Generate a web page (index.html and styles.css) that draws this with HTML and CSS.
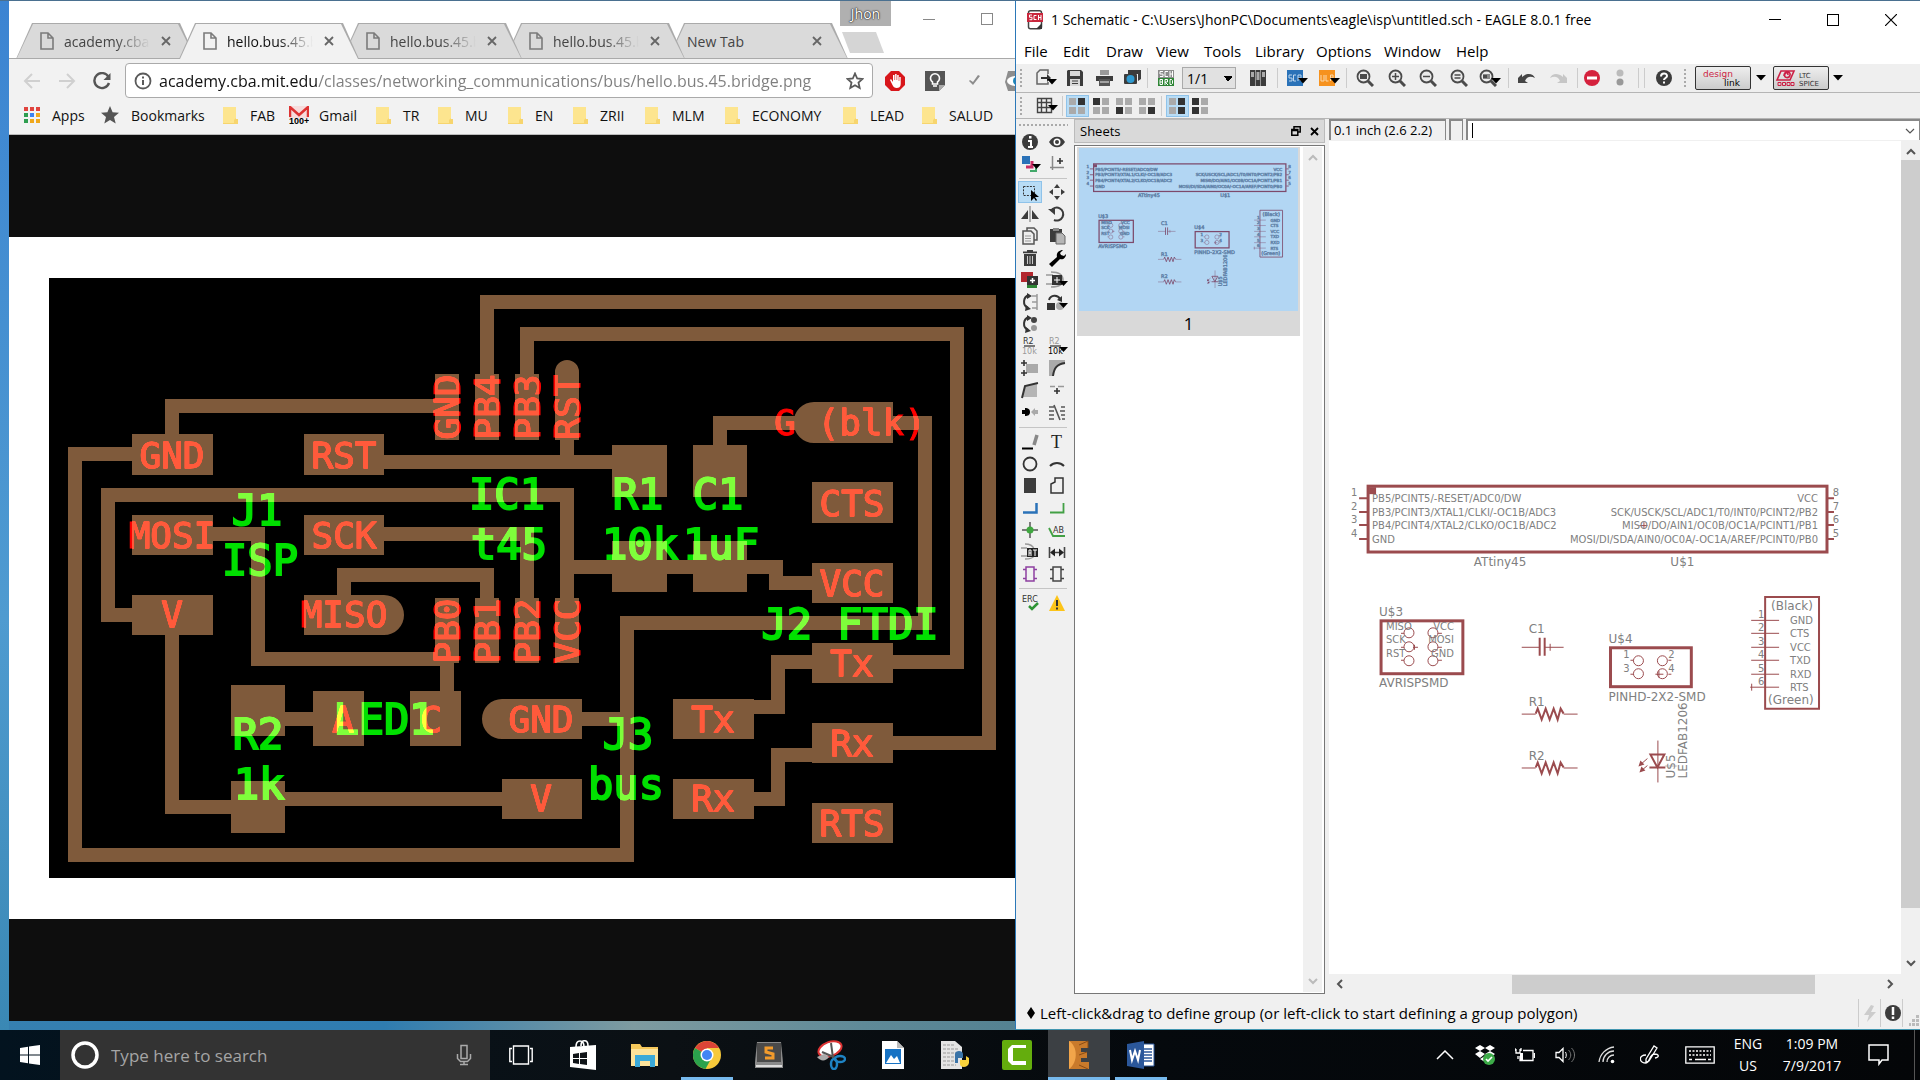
FILE: index.html
```html
<!DOCTYPE html>
<html lang="en">
<head>
<meta charset="UTF-8">
<meta name="viewport" content="width=device-width, initial-scale=1.0">
<title>Desktop</title>
<link rel="stylesheet" href="styles.css">
</head>
<body>

<!-- shared symbols -->
<svg class="defs" width="0" height="0" aria-hidden="true">
<symbol id="page" viewBox="0 0 14 18"><path d="M1 1h7l5 5v11H1zM8 1v5h5" fill="none" stroke="#7b7b7b" stroke-width="1.6"/></symbol>
<symbol id="x" viewBox="0 0 12 12"><path d="M2 2l8 8M10 2l-8 8" stroke="#666" stroke-width="1.8"/></symbol>
<symbol id="folder" viewBox="0 0 16 18"><path d="M1 1h13v12h2v5H1z" fill="#f7d56e"/><path d="M1 1h13v11l-2 2v3H1z" fill="#fde58f"/></symbol>
<symbol id="dd" viewBox="0 0 10 6"><path d="M0 0h10L5 5.500z" fill="#000"/></symbol>
<symbol id="lens" viewBox="0 0 18 18"><circle cx="7.500" cy="7.500" r="6" fill="#ececec" stroke="#4b4b4b" stroke-width="1.800"/><path d="M12 12l5 5" stroke="#4b4b4b" stroke-width="3"/></symbol>
<symbol id="up" viewBox="0 0 10 8"><path d="M1 7l4-4 4 4" fill="none" stroke="currentColor" stroke-width="2"/></symbol>
</svg>

<div class="desktop">

<main class="browser">
<div class="tabstrip">
<button class="tab"><svg width="14" height="18"><use href="#page"/></svg><span>academy.cba.mit</span><svg class="close" width="12" height="12"><use href="#x"/></svg></button>
<button class="tab active"><svg width="14" height="18"><use href="#page"/></svg><span>hello.bus.45.bridge</span><svg class="close" width="12" height="12"><use href="#x"/></svg></button>
<button class="tab"><svg width="14" height="18"><use href="#page"/></svg><span>hello.bus.45.bridge</span><svg class="close" width="12" height="12"><use href="#x"/></svg></button>
<button class="tab"><svg width="14" height="18"><use href="#page"/></svg><span>hello.bus.45.bridge</span><svg class="close" width="12" height="12"><use href="#x"/></svg></button>
<button class="tab plain"><span>New Tab</span><svg class="close" width="12" height="12"><use href="#x"/></svg></button>
<button class="newtab" aria-label="New tab"></button>
<div class="wincontrols"><button class="user">Jhon</button>
<svg width="12" height="12"><path d="M0 6.500h12" stroke="#888"/></svg>
<svg width="13" height="13"><rect x=".5" y=".5" width="11" height="11" fill="none" stroke="#888"/></svg></div>
</div>

<div class="navbar">
<svg width="18" height="18"><path d="M17 9H2M9 2L2 9l7 7" fill="none" stroke="#d0d0d0" stroke-width="2"/></svg>
<svg width="18" height="18"><path d="M1 9h15M9 2l7 7-7 7" fill="none" stroke="#d0d0d0" stroke-width="2"/></svg>
<svg width="18" height="18"><path d="M15.500 5A7.500 7.500 0 1 0 16 11" fill="none" stroke="#555" stroke-width="2.400"/><path d="M17.500 1v7h-7z" fill="#555"/></svg>
<div class="omnibox">
<svg width="18" height="18"><circle cx="9" cy="9" r="7.500" fill="none" stroke="#5a5a5a" stroke-width="1.800"/><path d="M9 8v5M9 4.500v2" stroke="#5a5a5a" stroke-width="2"/></svg>
<input type="text" aria-label="Address" value="academy.cba.mit.edu/classes/networking_communications/bus/hello.bus.45.bridge.png">
<svg width="18" height="18"><path d="M9 1.500l2.200 5 5.300.5-4 3.600 1.200 5.400L9 13.200 4.300 16l1.200-5.400-4-3.600 5.300-.5z" fill="none" stroke="#5a5a5a" stroke-width="1.800"/></svg>
</div>
<div class="exts">
<svg width="20" height="20"><path d="M6 0h8l6 6v8l-6 6H6l-6-6V6z" fill="#d8161b"/><path d="M5 9l1-1 2 3V4h1.500v5h.6V3h1.500v6h.6V4h1.500v6h.6V6h1.400v7c0 3-2 4-4 4s-3.500-1-4.200-3z" fill="#fff"/></svg>
<svg width="20" height="20"><path d="M0 0h20v14l-6 6H0z" fill="#555"/><path d="M20 14h-6v6z" fill="#aaa"/><path d="M7.500 11a4.500 4.500 0 1 1 5 0v2h-5zM8 15h4" fill="none" stroke="#fff" stroke-width="1.600"/></svg>
<svg width="20" height="20"><path d="M4 10l4 4 7-9-2-1-5 7-3-2z" fill="#8c8c8c"/></svg>
<svg width="20" height="20"><path d="M3 0h14v20H3l-3-9z" fill="#8d8d8d"/><ellipse cx="11" cy="10" rx="9" ry="5" fill="#fff"/><circle cx="12" cy="10" r="4" fill="#1d87b8"/></svg>
</div>
</div>

<nav class="bookmarks">
<a href="#"><svg width="16" height="18"><g fill="#e0443e"><path d="M0 1h4v4H0zM6 1h4v4H6zM12 1h4v4h-4z"/></g><path d="M0 7h4v4H0zM0 13h4v4H0z" fill="#2f9e50"/><path d="M6 7h4v4H6z" fill="#3b82f0"/><path d="M12 7h4v4h-4zM6 13h4v4H6zM12 13h4v4h-4z" fill="#f0a81c"/></svg>Apps</a>
<a href="#"><svg width="18" height="18"><path d="M9 0l2.600 6.300 6.400.5-5 4.200 1.700 6.600L9 14l-5.700 3.600L5 11 0 6.800l6.400-.5z" fill="#555"/></svg>Bookmarks</a>
<a href="#"><svg width="16" height="18"><use href="#folder"/></svg>FAB</a>
<a href="#" class="gmail"><svg width="20" height="18"><path d="M0 0h20v12H0z" fill="#f6dcdc"/><path d="M1 11V1l9 8 9-8v10" fill="none" stroke="#d33" stroke-width="2.500"/><text x="0" y="18" font-family="Liberation Sans" font-size="9" font-weight="bold" fill="#000">100+</text></svg>Gmail</a>
<a href="#"><svg width="16" height="18"><use href="#folder"/></svg>TR</a>
<a href="#"><svg width="16" height="18"><use href="#folder"/></svg>MU</a>
<a href="#"><svg width="16" height="18"><use href="#folder"/></svg>EN</a>
<a href="#"><svg width="16" height="18"><use href="#folder"/></svg>ZRII</a>
<a href="#"><svg width="16" height="18"><use href="#folder"/></svg>MLM</a>
<a href="#"><svg width="16" height="18"><use href="#folder"/></svg>ECONOMY</a>
<a href="#"><svg width="16" height="18"><use href="#folder"/></svg>LEAD</a>
<a href="#"><svg width="16" height="18"><use href="#folder"/></svg>SALUD</a>
</nav>

<div class="viewer">
<div class="sheet">
<svg class="board" viewBox="49 278 966 600" preserveAspectRatio="xMinYMin slice">
<rect x="49" y="278" width="966" height="600" fill="#000"/>
<!-- copper -->
<g class="trace">
<path d="M172 436V406H437M487 376V302H989V743H891M527 376V334H957V662H891M384 462H613M567 438V462"/>
<path d="M134 454H75V855H627V623H925V423H720V447M134 615H108V495H567V600M567 567H776V583H814M172 632V807H233"/>
<path d="M212 534H258V659H447V693M383 534H527V600M344 597V575H487V600M284 719H314M580 719H627M284 799H504"/>
<path d="M752 707H778V662H814M752 799H778V755H814"/>
</g>
<g class="pad">
<path d="M132 434h81v41h-81zM304 434h80v41h-80zM132 515h81v40h-81zM304 515h80v40h-80zM132 595h81v40h-81zM304 595h80a20 20 0 0 1 0 40h-80z"/>
<path d="M435 374h24v66h-24zM475 374h24v66h-24zM515 374h24v66h-24zM555 372a12 12 0 0 1 24 0v68h-24zM435 598h24v65h-24zM475 598h24v65h-24zM515 598h24v65h-24zM555 598h24v65h-24z"/>
<path d="M231 685h54v51h-54zM231 781h54v52h-54zM313 691h51v55h-51zM410 691h51v55h-51zM502 699h80v40h-80a20 20 0 0 1 0-40zM502 779h80v40h-80z"/>
<path d="M612 445h55v52h-55zM612 541h55v51h-55zM693 445h54v52h-54zM693 541h54v51h-54zM673 699h81v40h-81zM673 779h81v40h-81z"/>
<path d="M814 402h79v41h-79a20 20 0 0 1 0-41zM812 482h81v41h-81zM812 563h81v40h-81zM812 643h81v40h-81zM812 723h81v40h-81zM812 803h81v40h-81z"/>
</g>
<!-- pin names -->
<g class="pin">
<text x="172" y="468">GND</text><text x="344" y="468">RST</text><text x="172" y="548">MOSI</text><text x="344" y="548">SCK</text><text x="172" y="627">V</text><text x="344" y="627">MISO</text>
<text x="343" y="732">A</text><text x="431" y="732">C</text><text x="541" y="732">GND</text><text x="541" y="811">V</text><text x="713" y="732">Tx</text><text x="713" y="811">Rx</text>
<text x="850" y="435">G (blk)</text><text x="852" y="516">CTS</text><text x="852" y="596">VCC</text><text x="852" y="676">Tx</text><text x="852" y="756">Rx</text><text x="852" y="836">RTS</text>
<text transform="translate(460 407) rotate(-90)">GND</text><text transform="translate(500 407) rotate(-90)">PB4</text><text transform="translate(540 407) rotate(-90)">PB3</text><text transform="translate(580 407) rotate(-90)">RST</text>
<text transform="translate(460 631) rotate(-90)">PB0</text><text transform="translate(500 631) rotate(-90)">PB1</text><text transform="translate(540 631) rotate(-90)">PB2</text><text transform="translate(580 631) rotate(-90)">VCC</text>
</g>
<!-- part names -->
<g class="part">
<text x="257" y="525">J1</text><text x="260" y="575">ISP</text><text x="507" y="509">IC1</text><text x="509" y="559">t45</text><text x="638" y="509">R1</text><text x="640" y="559">10k</text><text x="718" y="509">C1</text><text x="721" y="559">1uF</text>
<text x="850" y="639">J2 FTDI</text><text x="628" y="749">J3</text><text x="626" y="799">bus</text><text x="258" y="749">R2</text><text x="259" y="799">1k</text><text x="384" y="734">LED1</text>
</g>
</svg>
</div>
</div>
</main>

<section class="eagle">
<header class="titlebar">
<svg width="16" height="20"><rect x="1.500" y=".8" width="13" height="18" rx="2" fill="#fff" stroke="#444" stroke-width="1.500"/><path d="M9 19l6-6v6z" fill="#333"/><path d="M0 3h16v9H0z" fill="#c9273d"/><path d="M5 5H2.500v2.300H5v2.400H2.500M9.500 5.500H7v4h2.500M11.500 5v5M14 5v5M11.500 7.500H14" fill="none" stroke="#fff"/></svg>
<h1>1 Schematic - C:\Users\JhonPC\Documents\eagle\isp\untitled.sch - EAGLE 8.0.1 free</h1>
<div class="winbtns">
<button aria-label="Minimize"><svg width="12" height="12"><path d="M0 5.500h12" stroke="#000"/></svg></button>
<button aria-label="Maximize"><svg width="12" height="12"><rect x=".5" y=".5" width="11" height="11" fill="none" stroke="#000"/></svg></button>
<button aria-label="Close"><svg width="12" height="12"><path d="M0 0l12 12M12 0L0 12" stroke="#000" stroke-width="1.200"/></svg></button>
</div>
</header>
<nav class="menubar"><button>File</button><button>Edit</button><button>Draw</button><button>View</button><button>Tools</button><button>Library</button><button>Options</button><button>Window</button><button>Help</button></nav>

<div class="toolbar main-tools">
<i class="grip"></i>
<svg width="22" height="18"><path d="M12 5V1H4L1 4v11h11v-2" fill="none" stroke="#666" stroke-width="1.500"/><path d="M5 8h6V5l4 4-4 4v-3H5z" fill="#333"/><path d="M11 10h10l-5 5.500z"/></svg>
<svg width="16" height="16"><path d="M1 0h13l2 2v14H0V1z" fill="#3c3c3c"/><path d="M3 1h10v5H3zM3 9h10v7H3z" fill="#d8d8d8"/><path d="M5 11h6M5 13.500h6" stroke="#3c3c3c"/></svg>
<svg width="17" height="16"><path d="M4 0h9v5H4z" fill="#999"/><path d="M0 6h17v5H0z" fill="#3c3c3c"/><path d="M3 9h11v7H3z" fill="#555"/><path d="M4 12h9" stroke="#eee"/></svg>
<svg width="17" height="16"><path d="M4 0h13v9l-3 2V4H4z" fill="#3c3c3c"/><rect y="4" width="13" height="10" rx="1" fill="#3c3c3c"/><circle cx="6.500" cy="9" r="4" fill="#2f9ad0"/></svg>
<i class="sep"></i>
<svg width="16" height="16"><path d="M0 0h16v8H0z" fill="#8c8c8c"/><path d="M0 8h16v8H0z" fill="#2d8535"/><path d="M5 1.500H2V4h3v2.500H2M10 1.500H7v5h3M12 1v6M14.500 1v6M12 4h2M2 9.500v5h2.500v-5zM2 12h2.500M7 15V9.500h2.500V12H7l3 3M12 9.500v5h1.500l1-1v-3l-1-1z" fill="none" stroke="#fff"/></svg>
<select aria-label="Sheet"><option>1/1</option></select>
<svg width="16" height="16"><path d="M0 0h5v16H0zM5.500 0h5v16h-5zM11 0h5v16h-5z" fill="#3c3c3c"/><path d="M1 2h3v5H1zM6.500 2h3v8h-3zM12 2h3v5h-3z" fill="#aaa"/></svg>
<i class="sep"></i>
<svg width="24" height="16"><path d="M3 0h16v16H3z" fill="#2a72b8"/><path d="M8 5H5v3h3v3H5M12 5H9.500v6H12M14 11V5h3v3h-3l3 3" fill="none" stroke="#bcd6ee"/><path d="M14 8h10l-5 5.500z"/></svg>
<svg width="24" height="16"><path d="M3 0h16v16H3z" fill="#f6921e"/><path d="M5 5v6h3V5M10 5v6h2.500M14.500 11V5H17v3h-2.500" fill="none" stroke="#fcd9ac"/><path d="M14 8h10l-5 5.500z"/></svg>
<i class="sep"></i>
<svg width="18" height="18"><use href="#lens"/><path d="M4 5h7v5H4z" fill="#4b4b4b"/></svg>
<svg width="18" height="18"><use href="#lens"/><path d="M4 7.500h7M7.500 4v7" stroke="#4b4b4b" stroke-width="1.500"/></svg>
<svg width="18" height="18"><use href="#lens"/><path d="M4 7.500h7" stroke="#4b4b4b" stroke-width="1.500"/></svg>
<svg width="18" height="18"><use href="#lens"/><path d="M4.500 6h6M4.500 9h6" stroke="#4b4b4b" stroke-width="1.500"/></svg>
<svg width="22" height="18"><use href="#lens" width="18" height="18"/><path d="M4 5h7v5H4z" fill="#888"/><path d="M4 6h4v3H4z" fill="#4b4b4b"/><path d="M12 9h10l-5 5.500z"/></svg>
<i class="sep"></i>
<svg width="17" height="16"><path d="M0 8l4-4v3c6-5 11-3 13 1-4-2-8-2-10 3l3 2H0z" fill="#454545"/></svg>
<svg width="17" height="16"><path d="M17 8l-4-4v3C7 2 2 4 0 8c4-2 8-2 10 3l-3 2h10z" fill="#c6c6c6"/></svg>
<i class="sep"></i>
<svg width="16" height="16"><circle cx="8" cy="8" r="8" fill="#d5213d"/><path d="M3 6.500h10v3H3z" fill="#fff"/></svg>
<svg width="8" height="18"><circle cx="4" cy="4" r="3.500" fill="#bbb"/><circle cx="4" cy="13" r="3.500" fill="#999"/></svg>
<i class="sep"></i><i class="sep"></i>
<svg width="16" height="16"><circle cx="8" cy="8" r="8" fill="#3c3c3c"/><path d="M5 6.500c0-4 6-4 6-.5 0 2-3 2-3 4M8 11.500v2" fill="none" stroke="#fff" stroke-width="2"/></svg>
<i class="grip"></i>
<button class="vendor">
<svg width="54" height="22"><g font-family="DejaVu Sans" font-size="9"><text x="7" y="10" fill="#cc1f45">design</text><text x="28" y="19" fill="#000">link</text></g></svg></button>
<svg width="10" height="6"><use href="#dd"/></svg>
<button class="vendor">
<svg width="54" height="22"><path d="M3 13l4-9h13l-4 9zM10 9c0-5 7-5 6-1s-7 3-5-1c1-2 3-2 3 1" fill="none" stroke="#cc1f45" stroke-width="1.600"/><path d="M4 15.500h3v3H4zM8.500 15.500h3v3h-3zM13 15.500h3v3h-3zM17 15.500h3v3h-3z" fill="none" stroke="#cc1f45"/><g font-family="DejaVu Sans" font-size="7" fill="#333"><text x="25" y="11">LTC</text><text x="25" y="19">SPICE</text></g></svg></button>
<svg width="10" height="6"><use href="#dd"/></svg>
</div>

<div class="toolbar layer-tools">
<i class="grip"></i>
<svg width="22" height="17"><path d="M1.500 1.500h14v14h-14zM5.500 1v15M10.500 1v15M1 5.500h15M1 10.500h15" fill="none" stroke="#444" stroke-width="1.400"/><path d="M12 8h10l-5 5.500z"/></svg>
<i class="sep"></i>
<button class="on"><svg width="16" height="16"><path d="M0 0h7v7H0zM0 9h7v7H0zM9 9h7v7H9z" fill="#aaa"/><path d="M9 0h7v7H9z" fill="#333"/></svg></button>
<button><svg width="16" height="16"><path d="M9 0h7v7H9zM0 9h7v7H0zM9 9h7v7H9z" fill="#aaa"/><path d="M0 0h7v7H0z" fill="#333"/></svg></button>
<button><svg width="16" height="16"><path d="M0 0h7v7H0zM9 0h7v7H9zM9 9h7v7H9z" fill="#aaa"/><path d="M0 9h7v7H0z" fill="#333"/></svg></button>
<button><svg width="16" height="16"><path d="M0 0h7v7H0zM9 0h7v7H9zM0 9h7v7H0z" fill="#aaa"/><path d="M9 9h7v7H9z" fill="#333"/></svg></button>
<i class="sep"></i>
<button class="on"><svg width="16" height="16"><path d="M0 0h7v7H0zM0 9h7v7H0z" fill="#aaa"/><path d="M9 0h7v7H9zM9 9h7v7H9z" fill="#333"/></svg></button>
<button><svg width="16" height="16"><path d="M9 0h7v7H9zM9 9h7v7H9z" fill="#aaa"/><path d="M0 0h7v7H0zM0 9h7v7H0z" fill="#333"/></svg></button>
</div>

<div class="work">
<aside class="palette">
<i class="hgrip"></i>
<svg width="18" height="18"><circle cx="9" cy="9" r="8" fill="#3c3c3c"/><path d="M7 8h3v6M7 14h5" stroke="#fff" stroke-width="2" fill="none"/><path d="M8 3h2.500v2.500H8z" fill="#fff"/></svg>
<svg width="18" height="18"><path d="M1 9c4-7 12-7 16 0-4 7-12 7-16 0z" fill="#3c3c3c"/><circle cx="9" cy="9" r="3.500" fill="#fff"/><circle cx="9" cy="9" r="2" fill="#3c3c3c"/></svg>
<svg width="24" height="18"><path d="M4 1h8v8H4z" fill="#2a72b8"/><path d="M14 6v6H8" fill="none" stroke="#c92f65" stroke-width="3"/><path d="M18 10v6h-6" fill="none" stroke="#42a86a" stroke-width="2"/><path d="M14 9h9l-4.500 5z"/></svg>
<svg width="18" height="18"><path d="M4.500 1v14M2 12.500h14" stroke="#888" stroke-width="1.500"/><path d="M12 3v6M9 6h6" stroke="#333" stroke-width="1.600"/></svg>
<i class="rule"></i>
<svg class="on" width="22" height="20"><path d="M4.500 4.500h11v9h-11z" fill="none" stroke="#333" stroke-dasharray="2 1.200"/><path d="M12 8v11l3-3 2 3 1-1-2-3h4z" fill="#000"/></svg>
<svg width="18" height="18"><path d="M9 1l3 4H6zM9 17l3-4H6zM1 9l4-3v6zM17 9l-4-3v6z" fill="#3c3c3c"/></svg>
<svg width="18" height="18"><path d="M9 1v16" stroke="#999" stroke-width="1.500"/><path d="M7 5v9H0zM11 5v9h7z" fill="#3c3c3c"/></svg>
<svg width="18" height="18"><path d="M3 6a6.500 6.500 0 1 1 3 9" fill="none" stroke="#3c3c3c" stroke-width="2"/><path d="M0 4h7v6z" fill="#3c3c3c"/></svg>
<svg width="18" height="18"><path d="M6 4V1h7l3 3v9h-3M2 4h8l3 3v10H2z" fill="#eee" stroke="#555" stroke-width="1.500"/><path d="M4 9h6M4 11.500h6M4 14h6" stroke="#999"/></svg>
<svg width="18" height="18"><path d="M2 2h12v13H2z" fill="#3c3c3c"/><path d="M5 1h6v3H5z" fill="#888"/><path d="M8 6h6l3 3v8H8z" fill="#b5b5b5" stroke="#666"/></svg>
<svg width="18" height="18"><path d="M3 5h12v12H3zM2 2.500h14v1.800H2zM6 1h6v2H6z" fill="#3c3c3c"/><path d="M6.500 7v8M9 7v8M11.500 7v8" stroke="#ccc"/></svg>
<svg width="18" height="18"><path d="M1 15L9 8c-1-4 2-7 6-7l-3 3 1 2 3 1 2-2c0 4-3 6-6 5l-8 8z" fill="#000"/></svg>
<svg width="18" height="18"><path d="M0 1h12v10H0z" fill="#b3262e"/><path d="M6 12h10v5H6z" fill="#2d8535"/><path d="M6 5h11v9H6z" fill="#333"/><path d="M11.500 7v5M9 9.500h5" stroke="#fff" stroke-width="1.500"/></svg>
<svg width="22" height="18"><path d="M0 4h7M0 13h7M5 1c9 0 12 4 12 8s-3 7-12 7" fill="none" stroke="#999" stroke-width="1.500"/><path d="M6 4h10v10H6z" fill="#333"/><path d="M11 6v6M8 9h6" stroke="#fff"/><path d="M13 10h9l-4.500 5z"/></svg>
<svg width="18" height="18"><path d="M8 2a7 7 0 0 0-1 13" fill="none" stroke="#333" stroke-width="2"/><path d="M6 0l5 3-5 3zM5 12l5 4-6 2z" fill="#333"/><path d="M16 1v16M11 3h5M11 9h5M11 15h5" stroke="#999" stroke-width="1.500"/></svg>
<svg width="22" height="18"><path d="M3 7a6 6 0 0 1 11-1" fill="none" stroke="#333" stroke-width="2"/><path d="M16 3v6l-5-2zM1 10h8v7H1z" fill="#333"/><circle cx="14" cy="13" r="4" fill="#aaa"/><path d="M13 10h9l-4.500 5z"/></svg>
<svg width="18" height="18"><path d="M8 2a7 7 0 0 0-1 13" fill="none" stroke="#333" stroke-width="2"/><path d="M6 0l5 3-5 3zM5 12l5 4-6 2z" fill="#333"/><circle cx="13" cy="5" r="3" fill="#444"/><circle cx="13" cy="13" r="3" fill="#999"/></svg>
<i></i>
<svg width="18" height="18"><path d="M3 9h11" stroke="#555" stroke-width="1.500"/><g font-family="DejaVu Sans" font-size="8"><text x="2" y="7" fill="#333">R2</text><text x="1" y="17" fill="#999">10k</text></g></svg>
<svg width="22" height="18"><path d="M4 9h11" stroke="#555" stroke-width="1.500"/><g font-family="DejaVu Sans" font-size="8"><text x="3" y="7" fill="#999">R2</text><text x="2" y="17" fill="#000">10k</text></g><path d="M13 10h9l-4.500 5z"/></svg>
<svg width="18" height="18"><path d="M5 5h12v9H5z" fill="#aaa"/><path d="M3 1v6M0 4h6M3 11v6M0 14h6" stroke="#333" stroke-width="1.600"/></svg>
<svg width="18" height="18"><path d="M1 1h16v4C9 6 6 9 5 17H1z" fill="#aaa"/><path d="M17 4C9 5 6 9 5 17" fill="none" stroke="#333" stroke-width="2"/></svg>
<svg width="18" height="18"><path d="M4 5l12-2v13H2z" fill="#b5b5b5"/><path d="M1 17L4 5l13-3" fill="none" stroke="#333" stroke-width="2"/></svg>
<svg width="18" height="18"><path d="M2 5.500h5M10 5.500h6" stroke="#999" stroke-width="1.500"/><path d="M9 7v6M6 10h6" stroke="#333" stroke-width="1.600"/></svg>
<svg width="18" height="18"><path d="M1 7h3V5c3 0 5 1 5 4s-2 4-5 4v-2H1z" fill="#000"/><path d="M10 9l4-4v2h3v4h-3v2z" fill="#aaa"/></svg>
<svg width="18" height="18"><path d="M1 4h5M1 8h5M1 12h5M1 16h5M13 4h4M12 8h5M13 12h4M14 16h3M6 2l6 15" stroke="#555" stroke-width="1.600"/></svg>
<i class="rule"></i>
<svg width="18" height="18"><path d="M1 15.500h11" stroke="#000" stroke-width="2"/><path d="M16 2l-3 10" stroke="#888" stroke-width="3.500"/></svg>
<svg width="18" height="18"><text x="3" y="15" font-family="Liberation Serif" font-size="18" fill="#222">T</text></svg>
<svg width="18" height="18"><circle cx="9" cy="9" r="6.500" fill="none" stroke="#333" stroke-width="1.800"/></svg>
<svg width="18" height="18"><path d="M2 11c4-4 10-4 14 0" fill="none" stroke="#333" stroke-width="2"/></svg>
<svg width="18" height="18"><path d="M3 1h12v15H3z" fill="#3c3c3c"/></svg>
<svg width="18" height="18"><path d="M3 16V7l4-2V1h8v15z" fill="none" stroke="#333" stroke-width="1.500"/></svg>
<svg width="18" height="18"><path d="M2 13.500h13.500V4" fill="none" stroke="#2a72b8" stroke-width="2.500"/></svg>
<svg width="18" height="18"><path d="M2 13.500h13.500V4" fill="none" stroke="#42a045" stroke-width="1.800"/></svg>
<svg width="18" height="18"><path d="M9 1v16M1 9h16" stroke="#555" stroke-width="1.500"/><circle cx="9" cy="9" r="3.500" fill="#3fa83f"/></svg>
<svg width="18" height="18"><path d="M1 7l4 8h12" fill="none" stroke="#42a045" stroke-width="1.800"/><text x="5" y="12" font-family="DejaVu Sans" font-size="8" fill="#333">AB</text></svg>
<svg width="18" height="18"><path d="M0 5h6M0 13h6M4 1c5 0 8 2 9 5M4 16c5 0 8-1 9-3" fill="none" stroke="#999" stroke-width="1.300"/><path d="M6 5h11v9H6z" fill="#222"/><path d="M8 13V7h2v6M8 10h2M12 7h4M14 7v6" stroke="#fff" fill="none"/></svg>
<svg width="18" height="18"><path d="M1.500 4v11M16.500 4v11M4 9.500h10" stroke="#444" stroke-width="1.600"/><path d="M2 9.500l5-4v8zM16 9.500l-5-4v8z" fill="#222"/></svg>
<svg width="18" height="18"><path d="M5 2h8v14H5zM2 4.500h3M2 13.500h3M13 4.500h3M13 13.500h3" fill="none" stroke="#8d3fa0" stroke-width="1.500"/></svg>
<svg width="18" height="18"><path d="M5 2h8v14H5zM2 4.500h3M2 13.500h3M13 4.500h3M13 13.500h3" fill="none" stroke="#444" stroke-width="1.500"/></svg>
<i class="rule"></i>
<svg width="18" height="18"><text x="1" y="8" font-family="DejaVu Sans" font-size="8" fill="#333">ERC</text><path d="M8 12l3 3 6-6" fill="none" stroke="#2f9435" stroke-width="2.500"/></svg>
<svg width="18" height="18"><path d="M9 1l8 16H1z" fill="#fcc419"/><path d="M9 6v6M9 13.500v2" stroke="#333" stroke-width="2"/></svg>
</aside>

<section class="dock">
<header><h2>Sheets</h2><svg width="10" height="10"><path d="M3 3V.8h6.200V6H7M.8 3.500h6v5.700h-6zM.8 4.500h6" fill="none" stroke="#000" stroke-width="1.500"/></svg><svg width="9" height="9"><path d="M1 1l7 7M8 1L1 8" stroke="#000" stroke-width="1.800"/></svg></header>
<div class="sheets">
<figure><svg class="thumb" viewBox="1332 449 524 390"><use href="#schem"/></svg><figcaption>1</figcaption></figure>
<div class="vbar light"><svg width="10" height="8"><use href="#up"/></svg><svg class="flip" width="10" height="8"><use href="#up"/></svg></div>
</div>
</section>

<section class="editor">
<div class="cmdline"><output>0.1 inch (2.6 2.2)</output><i></i><label><input type="text" aria-label="Command"><span class="caret"></span><svg width="12" height="8"><path d="M2 2l4 4 4-4" fill="none" stroke="#555" stroke-width="1.200"/></svg></label></div>
<div class="canvas">
<svg class="drawing" viewBox="1329 141 571 835">
<g id="schem">
<g class="sym">
<g stroke-width="3">
<rect x="1367" y="487" width="460" height="66"/>
<rect x="1380" y="622" width="82" height="53"/>
<rect x="1610" y="649" width="81" height="39"/>
</g>
<rect x="1368" y="488" width="7" height="7" class="solid"/>
<path stroke-width="2" d="M1358 499h8M1358 513h8M1358 526h8M1358 540h8M1828 499h6M1828 513h6M1828 526h6M1828 540h6M1765 598h54v112h-54zM1539 639v18M1544 639v18"/>
<path stroke-width="1" d="M1639 526.500h8M1643.500 523v7M1400 634.500h3M1400 648.500h3M1400 661.500h3M1437 634.500h4M1437 648.500h4M1437 661.500h4M1412 648.500h5M1413.500 646v5M1521 648.500h18M1544 648.500h19M1549.500 645v7M1630 661.500h3M1630 675.500h3M1668 661.500h3M1668 675.500h3M1655 675.500h8M1658.500 672v7M1751 621.500h28M1751 634.500h28M1751 648.500h28M1751 661.500h28M1751 675.500h28M1750 688.500h29M1751.500 685v7M1657.500 742v42M1521 715.500h14M1563 715.500h14M1521 769.500h14M1563 769.500h14"/>
<path stroke-width="2" d="M1535 715l2-5 4 11 4-11 4 11 4-11 4 11 3-11 3 5M1535 769l2-5 4 11 4-11 4 11 4-11 4 11 3-11 3 5M1650 756h14l-7 13zM1649 769h16"/>
<path stroke-width="1" d="M1647 760l-8 7M1647 767l-7 6"/>
<path class="solid" d="M1638 768l2-6 4 4zM1639 774l2-6 4 4z"/>
<g stroke-width="1"><circle cx="1408" cy="634" r="5"/><circle cx="1408" cy="648" r="5"/><circle cx="1408" cy="662" r="5"/><circle cx="1432" cy="634" r="5"/><circle cx="1432" cy="648" r="5"/><circle cx="1432" cy="662" r="5"/><circle cx="1638" cy="662" r="5"/><circle cx="1638" cy="675" r="5"/><circle cx="1662" cy="662" r="5"/><circle cx="1662" cy="675" r="5"/></g>
</g>
<g class="lbl">
<text x="1371" y="503">PB5/PCINT5/-RESET/ADC0/DW</text><text x="1371" y="517">PB3/PCINT3/XTAL1/CLKI/-OC1B/ADC3</text><text x="1371" y="530">PB4/PCINT4/XTAL2/CLKO/OC1B/ADC2</text><text x="1371" y="544">GND</text>
<g text-anchor="end"><text x="1818" y="503">VCC</text><text x="1818" y="517">SCK/USCK/SCL/ADC1/T0/INT0/PCINT2/PB2</text><text x="1818" y="530">MISO/DO/AIN1/OC0B/OC1A/PCINT1/PB1</text><text x="1818" y="544">MOSI/DI/SDA/AIN0/OC0A/-OC1A/AREF/PCINT0/PB0</text>
<text x="1453" y="631">VCC</text><text x="1453" y="644">MOSI</text><text x="1453" y="658">GND</text></g>
<text x="1385" y="631">MISO</text><text x="1385" y="644">SCK</text><text x="1385" y="658">RST</text>
<text x="1790" y="625">GND</text><text x="1790" y="638">CTS</text><text x="1790" y="652">VCC</text><text x="1790" y="665">TXD</text><text x="1790" y="679">RXD</text><text x="1790" y="692">RTS</text>
<g text-anchor="middle"><text x="1353" y="497">1</text><text x="1353" y="511">2</text><text x="1353" y="524">3</text><text x="1353" y="538">4</text><text x="1836" y="497">8</text><text x="1836" y="511">7</text><text x="1836" y="524">6</text><text x="1836" y="538">5</text>
<text x="1761" y="619">1</text><text x="1761" y="632">2</text><text x="1761" y="646">3</text><text x="1761" y="659">4</text><text x="1761" y="673">5</text><text x="1761" y="686">6</text>
<text x="1626" y="659">1</text><text x="1626" y="673">3</text><text x="1671" y="659">2</text><text x="1671" y="673">4</text></g>
</g>
<g class="lbl big">
<text x="1473" y="567">ATtiny45</text><text x="1670" y="567">U$1</text><text x="1378" y="617">U$3</text><text x="1378" y="688">AVRISPSMD</text><text x="1528" y="634">C1</text><text x="1528" y="707">R1</text><text x="1528" y="761">R2</text><text x="1608" y="644">U$4</text><text x="1608" y="702">PINHD-2X2-SMD</text><text x="1771" y="611">(Black)</text><text x="1768" y="705">(Green)</text>
<text transform="translate(1675 780) rotate(-90)">U$5</text><text transform="translate(1687 780) rotate(-90)">LEDFAB1206</text>
</g>
</g>
</svg>
<div class="vbar"><svg width="10" height="8"><use href="#up"/></svg><i></i><svg class="flip" width="10" height="8"><use href="#up"/></svg></div>
<div class="hbar"><svg class="left" width="10" height="8"><use href="#up"/></svg><i></i><svg class="right" width="10" height="8"><use href="#up"/></svg></div>
</div>
</section>
</div>

<footer class="status">
<svg width="8" height="14"><path d="M4 1l4 6-4 6-4-6z"/></svg>
<p>Left-click&amp;drag to define group (or left-click to start defining a group polygon)</p>
<svg class="cell" width="22" height="28"><path d="M12 6L5 16h5l-2 7 9-10h-5l3-6z" fill="#ccc"/></svg>
<svg class="cell" width="22" height="28"><circle cx="12" cy="14" r="8" fill="#3c3c3c"/><path d="M12 8v8M12 17.500v2.500" stroke="#fff" stroke-width="2.500"/></svg>
<svg class="cell" width="18" height="28"><path d="M13 16h3v3h-3zM9 20h3v3H9zM13 20h3v3h-3zM6 24h2v3H6zM9 24h3v3H9zM13 24h3v3h-3z" fill="#bbb"/></svg>
</footer>
</section>

</div>

<footer class="taskbar">
<button class="start" aria-label="Start"><svg width="20" height="20"><path d="M0 3l8-1.200v7.700H0zM9 1.600L20 0v9.500H9zM0 10.500h8v7.700L0 17zM9 10.500h11V20L9 18.400z" fill="#fff"/></svg></button>
<label class="search"><svg width="28" height="28"><circle cx="14" cy="14" r="12" fill="none" stroke="#fff" stroke-width="3.500"/></svg><input type="text" placeholder="Type here to search" aria-label="Search"><svg width="16" height="22"><path d="M5 1.500h6v13H5zM1.500 10v4.500l3 3h7l3-3V10M8 18v3M4 20.500h8" fill="none" stroke="#aaa" stroke-width="1.500"/></svg></label>
<div class="apps">
<button aria-label="Task view"><svg width="24" height="20"><path d="M4.500 1h15v18h-15zM3 3.500H.8v13H3M21 3.500h2.200v13H21" fill="none" stroke="#fff" stroke-width="1.400"/></svg></button>
<button aria-label="Store"><svg width="28" height="30"><path d="M7 7c0-8 8-8 8 0M12 6c0-7 7-7 7 0" fill="none" stroke="#fff" stroke-width="1.600"/><path d="M1 7l26-2v25L1 27z" fill="#fff"/><path d="M4 14l6-1v5H4zM11 13l7-1v6h-7zM4 19h6v5l-6-1zM11 19h7v6l-7-1z" fill="#101418"/></svg></button>
<button aria-label="Explorer"><svg width="28" height="24"><path d="M0 1h9l2 3h16v18H0z" fill="#f5c85b"/><path d="M0 6h27v17H0z" fill="#fde39a"/><path d="M4 24V12h20v12h-5v-6H9v6z" fill="#3ba9d8"/></svg></button>
<button class="run" aria-label="Chrome"><svg width="28" height="28" viewBox="0 0 28 28"><circle cx="14" cy="14" r="14" fill="#f7c93a"/><path d="M14 14L1.900 7A14 14 0 0 1 26.100 7H14z" fill="#dc4437"/><path d="M14 14L1.900 7a14 14 0 0 0 10.600 21l6-11z" fill="#2ba24c"/><circle cx="14" cy="14" r="6.500" fill="#fff"/><circle cx="14" cy="14" r="5" fill="#4285f4"/></svg></button>
<button aria-label="Sublime Text"><svg width="28" height="26"><path d="M2 0h24l2 20v6H0v-6z" fill="#8a8a8a"/><path d="M2 1h24v19H2z" fill="#4a4a4a"/><path d="M1 24h26" stroke="#ddd" stroke-width="2"/><path d="M18 6h-7v4l7 2v4h-8" fill="none" stroke="#f29b2c" stroke-width="3"/></svg></button>
<button aria-label="Snipping Tool"><svg width="30" height="30"><ellipse cx="14" cy="9" rx="12" ry="7" fill="#fff" stroke="#d33" stroke-width="2" transform="rotate(-20 14 9)"/><path d="M1 17c4 5 9 4 12 0l-5-3z" fill="#aaa"/><path d="M15 3l2 15M6 12l14 6" stroke="#555" stroke-width="2"/><g fill="none" stroke="#1e83c4" stroke-width="2.500"><ellipse cx="18" cy="24" rx="3" ry="5"/><ellipse cx="24" cy="19" rx="5" ry="3"/></g></svg></button>
<button aria-label="Photos"><svg width="22" height="28"><path d="M0 0h15l7 7v21H0z" fill="#fff"/><path d="M15 0l7 7h-7z" fill="#bbb"/><path d="M3 8h16v15H3z" fill="#1672c4"/><path d="M4 22l5-8 3 4 3-3 3 7z" fill="#fff"/></svg></button>
<button aria-label="Python"><svg width="28" height="28"><path d="M0 0h14l7 6v22H0z" fill="#e4e4e4"/><path d="M2 4h11M2 8h15M2 12h15M2 16h12M2 20h12M2 24h13" stroke="#999" stroke-dasharray="3 1"/><path d="M14 18v-5c0-4 8-4 8 0v4h-5v5h-3z" fill="#3a74a8"/><path d="M28 17v5c-1 5-9 5-9 1v-4h6v-4z" fill="#f9d33c"/></svg></button>
<button aria-label="Camtasia"><svg width="30" height="30"><rect width="30" height="30" rx="2" fill="#64ad0d"/><path d="M24 8V5H10L6 9v12l4 4h14v-4H11V8z" fill="#fff"/></svg></button>
<button class="run current" aria-label="EAGLE"><svg width="22" height="30"><path d="M1 1h19v7h-7v4h6v6h-6v4h8v7H1z" fill="#c97a2b"/><path d="M1 1c9 5 9 22 0 28z" fill="#f2a54a"/><path d="M11 5l9-4v7M11 15l8-3M11 25l9 4" stroke="#8a4c15" fill="none"/></svg></button>
<button class="run" aria-label="Word"><svg width="28" height="28"><path d="M14 3h13v22H14z" fill="#fff" stroke="#2b579a"/><path d="M17 8h8M17 11h8M17 14h8M17 17h8M17 20h8" stroke="#2b579a" stroke-width="1.500"/><path d="M0 3l17-3v28L0 25z" fill="#2b579a"/><path d="M3 9l2 10 3-9 3 9 2-10" fill="none" stroke="#fff" stroke-width="2"/></svg></button>
</div>
<div class="tray">
<svg width="18" height="10"><path d="M1 9l8-8 8 8" fill="none" stroke="#fff" stroke-width="1.500"/></svg>
<svg width="20" height="22"><path d="M0 4l5-3 5 3-5 3zM10 4l5-3 5 3-5 3zM0 10l5-3 5 3-5 4zM10 10l5-3 5 3-5 4zM5 15l5-3 5 3-5 3z" fill="#fff"/><circle cx="14" cy="15" r="6" fill="#3cab48"/><path d="M11 15l2 2 4-4" fill="none" stroke="#fff" stroke-width="1.600"/></svg>
<svg width="20" height="16"><path d="M8 3.500h10v10H5V9M19.500 6v5M3 9v3M1 2v4h4V2M0 1v3M6 1v3" fill="none" stroke="#fff" stroke-width="1.300"/><path d="M5 6h3v7H5z" fill="#fff"/></svg>
<svg width="20" height="16"><path d="M1 5.500h3l4-4v13l-4-4H1z" fill="none" stroke="#fff" stroke-width="1.300"/><path d="M10.500 5c1 2 1 4 0 6" fill="none" stroke="#fff"/><path d="M13.500 3c3 3 3 7 0 10M16.500 1c4 4 4 10 0 14" fill="none" stroke="#777"/></svg>
<svg width="18" height="18"><path d="M1 16C2 8 8 2 16 1M5 16c0-6 5-11 11-11M9 16c0-4 3-7 7-7" fill="none" stroke="#ddd" stroke-width="1.300"/><circle cx="14.500" cy="15.500" r="1.800" fill="#fff"/></svg>
<svg width="20" height="20"><path d="M6 14L14 1l3 2-8 13-3 1zM6 10c-8 0-7 8 0 8 4 0 3-8 8-9 5 0 6 3 1 4" fill="none" stroke="#fff" stroke-width="1.300"/></svg>
<svg width="30" height="18"><path d="M.8.800h28.400v16.400H.8z" fill="none" stroke="#fff" stroke-width="1.300"/><path d="M4 5h22M4 9h22" stroke="#fff" stroke-width="1.500" stroke-dasharray="2 1.500"/><path d="M4 13.500h3M10 13.500h11M23 13.500h3" stroke="#fff" stroke-width="1.500"/></svg>
<p>ENG<br>US</p>
<p>1:09 PM<br>7/9/2017</p>
<svg width="22" height="22"><path d="M1 1h19v15h-6l-3 4v-4H1z" fill="none" stroke="#fff" stroke-width="1.500"/></svg>
<i class="peek"></i>
</div>
</footer>

</body>
</html>
```

FILE: styles.css
```css
*{margin:0;padding:0;box-sizing:border-box;}
body{height:100vh;display:flex;flex-direction:column;overflow:hidden;background:#060c12;font-family:"Open Sans","Noto Sans",sans-serif;font-size:15px;color:#000;}
button,input,select{font:inherit;color:inherit;border:0;background:none;}
svg{flex:none;display:block;}
i{display:block;}
.defs{position:absolute;}

.desktop{flex:1;min-height:0;display:grid;grid-template-columns:1006fr 905fr;grid-template-rows:minmax(0,1fr);padding-left:9px;background:linear-gradient(#3c84d2,#4f9bd0 60%,#3a88b4) 0 0/9px 100% no-repeat,linear-gradient(90deg,#3680b0,#2f7cb0 20%,#7e9ba0 33%,#5f8a98 45%,#4a7a8c 60%,#30627c);border-top:1px solid #4a7090;}

/* browser */
.browser{min-width:0;overflow:hidden;display:flex;flex-direction:column;background:#fff;margin-bottom:9px;}
.tabstrip{flex:none;height:58px;padding:22px 0 0 7px;display:flex;border-bottom:1px solid #a9a9a9;}
.tab{position:relative;z-index:1;flex:none;width:180px;height:36px;margin-right:-17px;padding:0 0 0 24px;display:flex;align-items:center;color:#444;font-size:14px;isolation:isolate;}
.tab:nth-child(1){z-index:5;}
.tab:nth-child(3){z-index:4;}
.tab:nth-child(4){z-index:3;}
.tab::before,.tab::after{content:"";position:absolute;z-index:-1;inset:0;background:#aaa;clip-path:polygon(0 100%,16px 0,164px 0,100% 100%);}
.tab::after{inset:1px 1px 1px 1px;background:#dadada;clip-path:polygon(0 100%,16px 0,161px 0,100% 100%);}
.tab.active{z-index:6;color:#111;}
.tab.active::after{bottom:0;background:#f2f2f2;}
.tab span{width:86px;margin-left:10px;overflow:hidden;white-space:nowrap;text-align:left;-webkit-mask-image:linear-gradient(90deg,#000 60%,transparent);mask-image:linear-gradient(90deg,#000 60%,transparent);}
.tab .close{margin-left:10px;}
.tab.plain{padding-left:19px;}
.tab.plain span{width:114px;margin-left:0;-webkit-mask-image:none;mask-image:none;}
.newtab{flex:none;width:42px;height:21px;margin:9px 0 0 11px;background:#d5d5d5;clip-path:polygon(0 0,34px 0,100% 100%,8px 100%);}
.wincontrols{flex:none;display:flex;margin:-22px 0 0 -44px;align-items:flex-start;}
.user{width:51px;height:25px;background:#b0b0b0;color:#fff;text-shadow:0 0 2px #000,0 0 1px #000;font-size:14px;line-height:25px;}
.wincontrols svg{margin:12px 0 0 32px;}
.wincontrols svg+svg{margin-left:46px;}

.navbar{flex:none;height:39px;background:#f2f2f2;display:flex;align-items:center;padding:4px 0 0 14px;}
.navbar>svg{margin-right:17px;}
.omnibox{flex:none;width:748px;height:35px;margin-left:-3px;padding:0 8px;display:flex;align-items:center;gap:7px;background:#fff;border:1px solid #aaa;border-radius:4px;}
.omnibox input{flex:1;min-width:0;height:33px;outline:0;font-size:16px;color:transparent;background:linear-gradient(90deg,#111 159px,#7e7e7e 159px);-webkit-background-clip:text;background-clip:text;}
.exts{display:flex;gap:20px;margin-left:12px;}
.bookmarks{flex:none;height:37px;display:grid;grid-template-columns:77px 121px 67px 86px 62px 70px 65px 72px 80px 118px 79px 80px;align-items:center;padding:0 0 2px 15px;background:#f2f2f2;border-bottom:1px solid #bbb;font-size:14px;}
.bookmarks a{display:flex;align-items:center;gap:12px;color:#111;text-decoration:none;white-space:nowrap;}
.bookmarks .gmail{gap:10px;}

.viewer{flex:1;min-height:0;background:#0e0e0e;display:flex;align-items:center;}
.sheet{width:100%;padding:41px 0 41px 40px;background:#fff;}
.board{width:100%;height:600px;}
.trace{fill:none;stroke:#7f5a3b;stroke-width:14;}
.pad{fill:#7f5a3b;}
.pin,.part{mix-blend-mode:plus-lighter;font-family:"DejaVu Sans Mono",monospace;text-anchor:middle;stroke-width:2;}
.pin{fill:#f00;stroke:#f00;stroke-width:1;font-size:36px;}
.part{fill:#00e000;stroke:#00e000;font-size:42px;}

/* eagle */
.eagle{min-width:0;display:flex;flex-direction:column;background:#f0f0f0;border-left:1px solid #2b78b8;border-bottom:1px solid #4296b0;}
.titlebar{flex:none;height:37px;display:flex;align-items:center;gap:8px;padding-left:11px;background:#fff;}
.titlebar h1{flex:1;font-size:14px;font-weight:400;white-space:nowrap;}
.winbtns{display:flex;gap:46px;padding-right:23px;}
.winbtns button{width:12px;height:12px;}
.menubar{flex:none;height:26px;display:grid;grid-template-columns:39px 43px 50px 48px 51px 61px 68px 72px 60px;padding-left:8px;background:#fff;}
.menubar button{text-align:left;line-height:26px;}
.toolbar{flex:none;display:grid;align-items:center;justify-items:center;border-bottom:1px solid #b5b5b5;background:#efefef;}
.main-tools{height:29px;grid-template-columns:18px 26px 29px 31px 24px 6px 32px 60px 32px 6px 32px 31px 6px 32px 31px 31px 31px 31px 6px 31px 32px 6px 24px 31px 6px 7px 32px 8px 63px 20px 58px 18px;}
.layer-tools{height:26px;grid-template-columns:18px 26px 5px 24px 23px 23px 23px 7px 24px 22px;}
.layer-tools button{display:grid;place-items:center;width:23px;height:22px;}
.layer-tools .on{background:#b8dcf5;border:1px solid #8fc3ea;}
.grip{width:4px;height:20px;background:radial-gradient(circle,#aaa 1px,transparent 1px) 0 0/4px 4px;justify-self:start;margin-left:3px;}
.sep{width:1px;height:20px;background:#ccc;}
.main-tools select{justify-self:start;width:54px;height:22px;padding:0 4px;border:1px solid #aaa;background:linear-gradient(45deg,transparent 50%,#000 50%) 40px 8px/5px 5px no-repeat,linear-gradient(-45deg,transparent 50%,#000 50%) 45px 8px/5px 5px no-repeat,#e1e1e1;appearance:none;font-size:14px;}
.vendor{width:56px;height:24px;border:1px solid #333;border-radius:2px;background:linear-gradient(#eee,#ccc);justify-self:end;}

.work{flex:1;min-height:0;display:grid;grid-template-columns:58px 251px 1fr;grid-template-rows:minmax(0,1fr);}
.palette{display:grid;grid-template-columns:27px 27px;grid-template-rows:12px 22px 22px 6px repeat(11,22px) 8px repeat(7,22px) 7px 22px;place-items:center;}
.hgrip{grid-column:1/3;width:50px;height:4px;background:radial-gradient(circle,#aaa 1px,transparent 1px) 0 0/4px 4px;}
.rule{grid-column:1/3;width:48px;height:1px;background:#c5c5c5;}
.palette .on{background:#b8dcf5;outline:1px solid #8fc3ea;}

.dock{display:flex;flex-direction:column;margin-bottom:3px;}
.dock header{height:24px;display:flex;align-items:center;gap:9px;padding:0 5px;background:#d9d9d9;border:1px solid #bbb;margin-bottom:2px;}
.dock h2{flex:1;font-size:13px;font-weight:400;}
.sheets{flex:1;display:flex;justify-content:space-between;background:#fff;border:1px solid #777;padding:1px 2px;}
figure{width:223px;height:189px;background:#d9d9d9;padding:0 2px;}
.thumb{width:219px;height:163px;margin-top:1px;background:#b2d6f3;--line:#7d4a6b;--text:#6182a8;--edge:#6182a8;}
figcaption{text-align:center;font-size:17px;line-height:25px;}
.vbar{width:19px;display:flex;flex-direction:column;align-items:center;justify-content:space-between;padding:6px 0;background:#f0f0f0;color:#555;}
.vbar.light{color:#bbb;}
.flip{transform:rotate(180deg);}
.left{transform:rotate(-90deg);}
.right{transform:rotate(90deg);}

.editor{min-width:0;display:flex;flex-direction:column;padding-left:4px;}
.cmdline{flex:none;height:22px;display:grid;grid-template-columns:117px 14px 1fr;gap:3px;}
.cmdline output,.cmdline i,.cmdline label{border:1px solid #888;border-width:2px 1px 0 2px;height:21px;}
.cmdline output{padding-left:3px;font-size:13px;line-height:18px;white-space:nowrap;}
.cmdline label{position:relative;display:flex;align-items:center;background:#fff;padding-right:3px;}
.cmdline input{flex:1;min-width:0;outline:0;}
.caret{position:absolute;left:4px;top:2px;width:1px;height:15px;background:#000;}
.canvas{flex:1;min-height:0;display:grid;grid-template-columns:1fr 19px;grid-template-rows:minmax(0,1fr) 20px;padding-bottom:3px;}
.drawing{width:100%;height:100%;background:#fff;min-height:0;}
.canvas .vbar i{width:19px;flex:1;margin:5px 0 52px;background:#cdcdcd;}
.hbar{display:flex;align-items:center;padding:0 5px;color:#555;}
.hbar i{width:54%;height:19px;margin:0 auto 0 168px;background:#cdcdcd;}

.sym{fill:none;stroke:var(--line,#9b4b4e);}
.sym .solid{fill:var(--line,#9b4b4e);stroke:none;}
.lbl{fill:var(--text,#808080);stroke:var(--edge,none);font-family:"DejaVu Sans",sans-serif;font-size:10px;}
.lbl.big{font-size:12px;}

.status{flex:none;height:32px;display:flex;align-items:center;padding-left:11px;}
.status p{flex:1;padding-left:5px;font-size:15px;white-space:nowrap;}
.cell{border-left:1px solid #ccc;}

/* taskbar */
.taskbar{flex:none;height:50px;display:flex;align-items:stretch;color:#fff;background:linear-gradient(90deg,#03131f,#0b1014 35%,#05090d 60%,#040608);}
.start{width:60px;display:grid;place-items:center;}
.search{width:430px;display:flex;align-items:center;gap:12px;padding:0 18px 0 11px;background:#333;}
.search input{flex:1;min-width:0;font-size:17px;outline:0;}
.search input::placeholder{color:#a5a5a5;opacity:1;}
.apps{display:flex;gap:10px;padding-left:5px;}
.apps button{width:52px;display:grid;place-items:center;border-bottom:3px solid transparent;border-top:3px solid transparent;}
.apps .run{border-bottom-color:#76b9ed;}
.apps .current{background:#3c4044;width:62px;margin:0 -5px;border-top-color:#3c4044;}
.tray{margin-left:auto;display:grid;grid-template-columns:40px 40px 40px 40px 44px 42px 58px 38px 90px 44px 19px;place-items:center;}
.tray p{font-size:14px;line-height:22px;text-align:center;white-space:nowrap;}
.peek{width:6px;height:100%;border-left:1px solid #555;justify-self:end;}
```
